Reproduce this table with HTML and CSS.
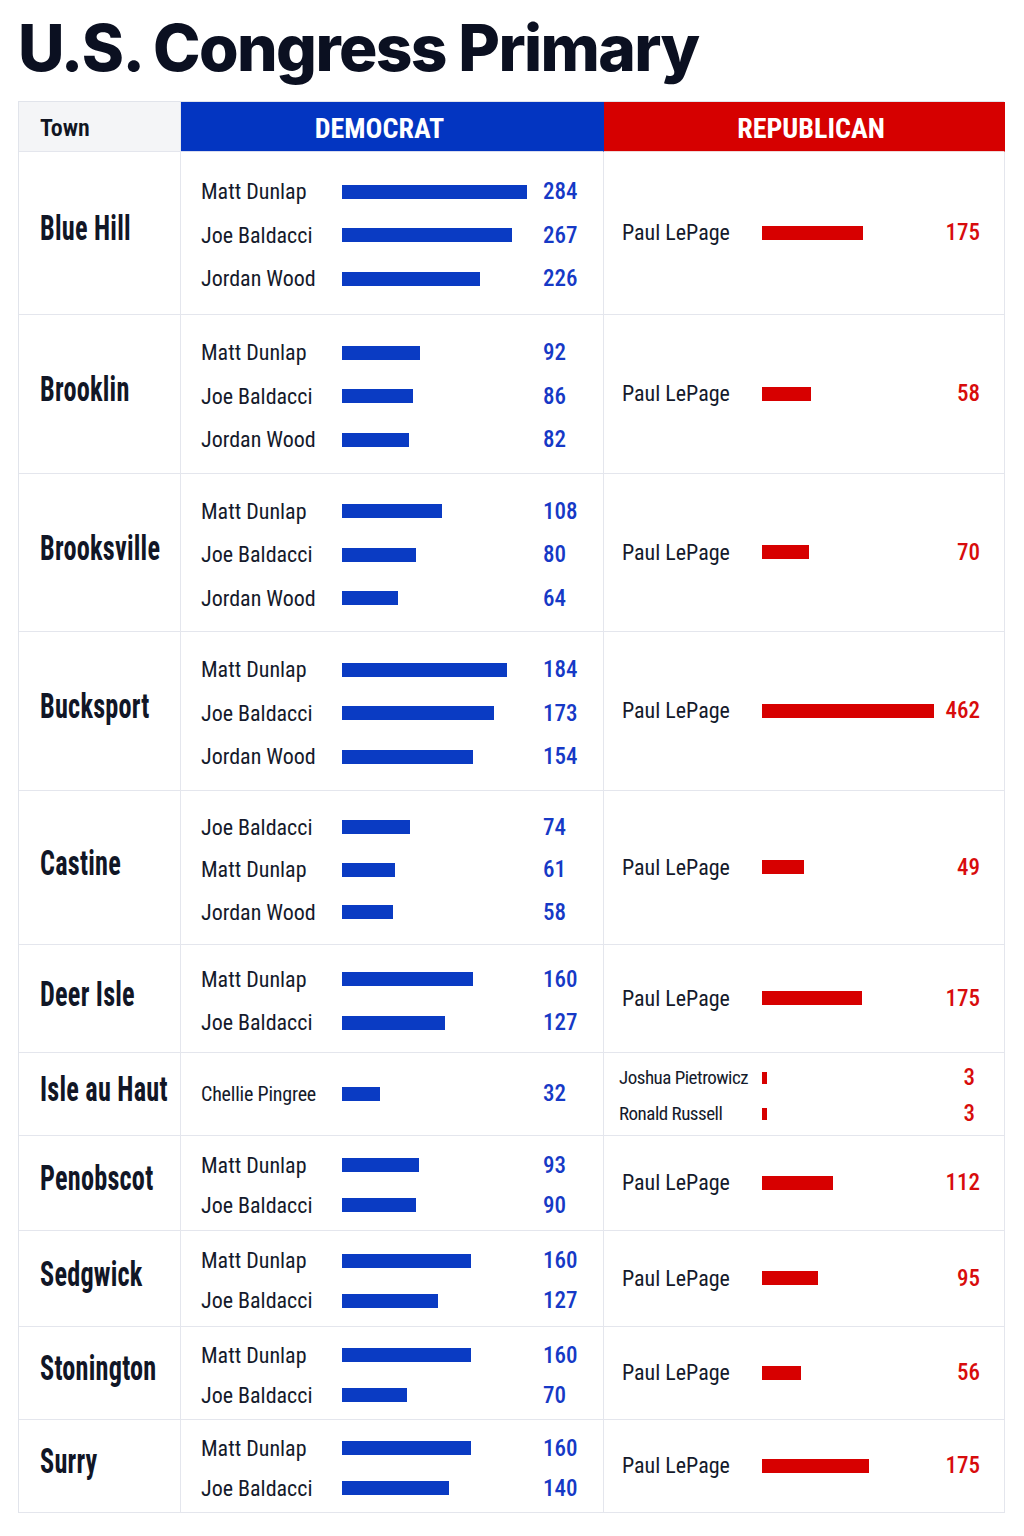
FILE: index.html
```html
<!DOCTYPE html>
<html lang="en">
<head>
<meta charset="utf-8">
<title>U.S. Congress Primary</title>
<link rel="stylesheet" href="styles.css">
</head>
<body>
<div class="page">
  <h1 class="title">U.S. Congress Primary</h1>
  <div class="results">
    <div class="hd hd-town">Town</div>
    <div class="hd hd-dem">DEMOCRAT</div>
    <div class="hd hd-rep">REPUBLICAN</div>

    <div class="town"><span class="town-name">Blue Hill</span></div>
    <div class="dem"><div class="cands">
      <div class="cand"><span class="name">Matt Dunlap</span><span class="track"><span class="bar" style="width:185px"></span></span><span class="num">284</span></div>
      <div class="cand"><span class="name">Joe Baldacci</span><span class="track"><span class="bar" style="width:170px"></span></span><span class="num">267</span></div>
      <div class="cand"><span class="name">Jordan Wood</span><span class="track"><span class="bar" style="width:138px"></span></span><span class="num">226</span></div>
    </div></div>
    <div class="rep"><div class="cands">
      <div class="cand"><span class="name">Paul LePage</span><span class="track"><span class="bar" style="width:101px"></span></span><span class="num">175</span></div>
    </div></div>

    <div class="town"><span class="town-name">Brooklin</span></div>
    <div class="dem"><div class="cands">
      <div class="cand"><span class="name">Matt Dunlap</span><span class="track"><span class="bar" style="width:78px"></span></span><span class="num">92</span></div>
      <div class="cand"><span class="name">Joe Baldacci</span><span class="track"><span class="bar" style="width:71px"></span></span><span class="num">86</span></div>
      <div class="cand"><span class="name">Jordan Wood</span><span class="track"><span class="bar" style="width:67px"></span></span><span class="num">82</span></div>
    </div></div>
    <div class="rep"><div class="cands">
      <div class="cand"><span class="name">Paul LePage</span><span class="track"><span class="bar" style="width:49px"></span></span><span class="num">58</span></div>
    </div></div>

    <div class="town"><span class="town-name">Brooksville</span></div>
    <div class="dem"><div class="cands">
      <div class="cand"><span class="name">Matt Dunlap</span><span class="track"><span class="bar" style="width:100px"></span></span><span class="num">108</span></div>
      <div class="cand"><span class="name">Joe Baldacci</span><span class="track"><span class="bar" style="width:74px"></span></span><span class="num">80</span></div>
      <div class="cand"><span class="name">Jordan Wood</span><span class="track"><span class="bar" style="width:56px"></span></span><span class="num">64</span></div>
    </div></div>
    <div class="rep"><div class="cands">
      <div class="cand"><span class="name">Paul LePage</span><span class="track"><span class="bar" style="width:47px"></span></span><span class="num">70</span></div>
    </div></div>

    <div class="town"><span class="town-name">Bucksport</span></div>
    <div class="dem"><div class="cands">
      <div class="cand"><span class="name">Matt Dunlap</span><span class="track"><span class="bar" style="width:165px"></span></span><span class="num">184</span></div>
      <div class="cand"><span class="name">Joe Baldacci</span><span class="track"><span class="bar" style="width:152px"></span></span><span class="num">173</span></div>
      <div class="cand"><span class="name">Jordan Wood</span><span class="track"><span class="bar" style="width:131px"></span></span><span class="num">154</span></div>
    </div></div>
    <div class="rep"><div class="cands">
      <div class="cand"><span class="name">Paul LePage</span><span class="track"><span class="bar" style="width:172px"></span></span><span class="num">462</span></div>
    </div></div>

    <div class="town"><span class="town-name">Castine</span></div>
    <div class="dem"><div class="cands castine">
      <div class="cand"><span class="name">Joe Baldacci</span><span class="track"><span class="bar" style="width:68px"></span></span><span class="num">74</span></div>
      <div class="cand"><span class="name">Matt Dunlap</span><span class="track"><span class="bar" style="width:53px"></span></span><span class="num">61</span></div>
      <div class="cand"><span class="name">Jordan Wood</span><span class="track"><span class="bar" style="width:51px"></span></span><span class="num">58</span></div>
    </div></div>
    <div class="rep"><div class="cands">
      <div class="cand"><span class="name">Paul LePage</span><span class="track"><span class="bar" style="width:42px"></span></span><span class="num">49</span></div>
    </div></div>

    <div class="town"><span class="town-name">Deer Isle</span></div>
    <div class="dem"><div class="cands">
      <div class="cand"><span class="name">Matt Dunlap</span><span class="track"><span class="bar" style="width:131px"></span></span><span class="num">160</span></div>
      <div class="cand"><span class="name">Joe Baldacci</span><span class="track"><span class="bar" style="width:103px"></span></span><span class="num">127</span></div>
    </div></div>
    <div class="rep"><div class="cands">
      <div class="cand"><span class="name">Paul LePage</span><span class="track"><span class="bar" style="width:100px"></span></span><span class="num">175</span></div>
    </div></div>

    <div class="town"><span class="town-name">Isle au Haut</span></div>
    <div class="dem dem-single"><div class="cands">
      <div class="cand"><span class="name small">Chellie Pingree</span><span class="track"><span class="bar" style="width:38px"></span></span><span class="num">32</span></div>
    </div></div>
    <div class="rep rep-multi"><div class="cands small-list">
      <div class="cand"><span class="name smaller">Joshua Pietrowicz</span><span class="track"><span class="bar thin" style="width:5px"></span></span><span class="num">3</span></div>
      <div class="cand"><span class="name smaller">Ronald Russell</span><span class="track"><span class="bar thin" style="width:5px"></span></span><span class="num">3</span></div>
    </div></div>

    <div class="town"><span class="town-name">Penobscot</span></div>
    <div class="dem"><div class="cands tight">
      <div class="cand"><span class="name">Matt Dunlap</span><span class="track"><span class="bar" style="width:77px"></span></span><span class="num">93</span></div>
      <div class="cand"><span class="name">Joe Baldacci</span><span class="track"><span class="bar" style="width:74px"></span></span><span class="num">90</span></div>
    </div></div>
    <div class="rep"><div class="cands">
      <div class="cand"><span class="name">Paul LePage</span><span class="track"><span class="bar" style="width:71px"></span></span><span class="num">112</span></div>
    </div></div>

    <div class="town"><span class="town-name">Sedgwick</span></div>
    <div class="dem"><div class="cands tight">
      <div class="cand"><span class="name">Matt Dunlap</span><span class="track"><span class="bar" style="width:129px"></span></span><span class="num">160</span></div>
      <div class="cand"><span class="name">Joe Baldacci</span><span class="track"><span class="bar" style="width:96px"></span></span><span class="num">127</span></div>
    </div></div>
    <div class="rep"><div class="cands">
      <div class="cand"><span class="name">Paul LePage</span><span class="track"><span class="bar" style="width:56px"></span></span><span class="num">95</span></div>
    </div></div>

    <div class="town"><span class="town-name">Stonington</span></div>
    <div class="dem"><div class="cands tight">
      <div class="cand"><span class="name">Matt Dunlap</span><span class="track"><span class="bar" style="width:129px"></span></span><span class="num">160</span></div>
      <div class="cand"><span class="name">Joe Baldacci</span><span class="track"><span class="bar" style="width:65px"></span></span><span class="num">70</span></div>
    </div></div>
    <div class="rep"><div class="cands">
      <div class="cand"><span class="name">Paul LePage</span><span class="track"><span class="bar" style="width:39px"></span></span><span class="num">56</span></div>
    </div></div>

    <div class="town"><span class="town-name">Surry</span></div>
    <div class="dem"><div class="cands tight">
      <div class="cand"><span class="name">Matt Dunlap</span><span class="track"><span class="bar" style="width:129px"></span></span><span class="num">160</span></div>
      <div class="cand"><span class="name">Joe Baldacci</span><span class="track"><span class="bar" style="width:107px"></span></span><span class="num">140</span></div>
    </div></div>
    <div class="rep"><div class="cands">
      <div class="cand"><span class="name">Paul LePage</span><span class="track"><span class="bar" style="width:107px"></span></span><span class="num">175</span></div>
    </div></div>
  </div>
</div>
</body>
</html>
```
FILE: styles.css
```css
* { box-sizing: border-box; }

body {
  margin: 0;
  background: #ffffff;
  color: #121828;
  font-family: "Roboto Condensed", "Roboto", "Liberation Sans", sans-serif;
}

.page {
  padding: 0 20px 0 18px;
}

.title {
  margin: 10px 0 14px;
  font-family: "Inter", "Roboto", sans-serif;
  font-weight: 800;
  font-size: 64px;
  line-height: 1.2;
  letter-spacing: -1.6px;
  color: #0b1021;
}

.results {
  display: grid;
  grid-template-columns: 162px 423px 401px;
  grid-template-rows: 50px 163px 159px 158px 159px 154px 108px 83px 95px 96px 93px 93px;
  width: 986px;
  border-left: 1px solid #e1e4eb;
  border-top: 1px solid #e1e4eb;
}

.results > div {
  border-right: 1px solid #e4e6ed;
  border-bottom: 1px solid #e4e6ed;
}

.hd {
  display: flex;
  align-items: center;
  padding-top: 4px;
  font-weight: 700;
  font-size: 28px;
}

.hd-town {
  background: #f4f5f7;
  color: #111522;
  font-size: 24px;
  font-weight: 600;
  padding-left: 21px;
}

.hd-dem {
  background: #0335c1;
  border-right-color: #0335c1 !important;
  border-bottom-color: #d9dcee !important;
  color: #ffffff;
  justify-content: center;
  padding-right: 25px;
}

.hd-rep {
  background: #d60000;
  border-right-color: #d60000 !important;
  border-bottom-color: #eed9d9 !important;
  color: #ffffff;
  justify-content: center;
  padding-left: 14px;
}

.town {
  display: flex;
  align-items: center;
  padding: 0 0 8px 21px;
  overflow: hidden;
}

.town-name {
  display: inline-block;
  font-weight: 700;
  font-size: 35px;
  line-height: 1;
  letter-spacing: 0.3px;
  white-space: nowrap;
  color: #111626;
  transform: scaleX(0.75);
  transform-origin: left center;
}

.dem,
.rep {
  display: flex;
  align-items: center;
}

.dem {
  padding: 5px 0 0 20px;
}

.dem-single {
  padding-top: 0;
}

.rep {
  padding: 0 24px 0 18px;
}

.rep-multi {
  padding: 4px 29px 0 15px;
}

.cands {
  width: 100%;
}

.cand {
  display: grid;
  align-items: center;
  height: 43.5px;
}

.castine .cand { height: 42.5px; }
.tight .cand { height: 40px; }
.small-list .cand { height: 36px; }

.dem .cand {
  grid-template-columns: 141px 201px auto;
}

.rep .cand {
  grid-template-columns: 140px 1fr auto;
}

.rep .small-list .cand {
  grid-template-columns: 143px 1fr auto;
}

.name {
  font-size: 22px;
  color: #141a2b;
  white-space: nowrap;
}

.name.small {
  font-size: 20px;
  letter-spacing: -0.2px;
}

.name.smaller {
  font-size: 19px;
  letter-spacing: -0.5px;
}

.track {
  display: flex;
  align-items: center;
}

.bar {
  display: block;
  height: 14px;
}

.bar.thin {
  height: 12px;
}

.dem .bar { background: #0a3bc3; }
.rep .bar { background: #d70000; }

.num {
  font-size: 23px;
  font-weight: 500;
}

.dem .num { color: #1639c6; }

.rep .num {
  color: #d80c0c;
  text-align: right;
  padding-left: 10px;
}
```
